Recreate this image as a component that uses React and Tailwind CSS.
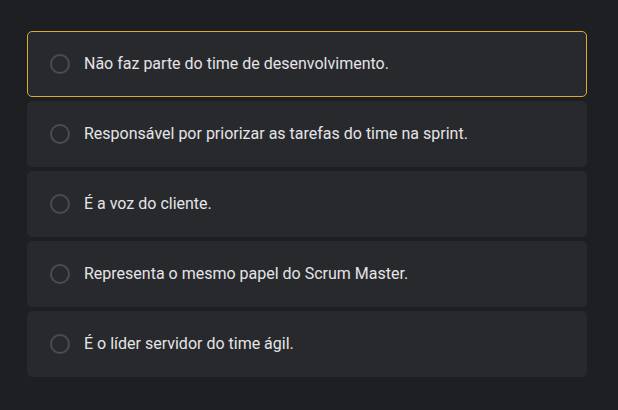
const OPTIONS = [
  'Não faz parte do time de desenvolvimento.',
  'Responsável por priorizar as tarefas do time na sprint.',
  'É a voz do cliente.',
  'Representa o mesmo papel do Scrum Master.',
  'É o líder servidor do time ágil.',
]

export default function App() {
  return (
    <div className="min-h-[410px] bg-[#1e1f23] pt-[31px] pb-[33px] pl-[27px] pr-[31px] font-['Roboto',sans-serif]">
      <div className="flex flex-col gap-1">
        {OPTIONS.map((text, i) => (
          <button
            key={text}
            className={
              'flex h-[66px] items-center rounded-[5px] bg-[#28292d] pl-[22px] text-left ' +
              (i === 0 ? 'border border-[#d8ad2e]' : 'border border-transparent')
            }
          >
            <span className="h-5 w-5 shrink-0 rounded-full border-2 border-[#4b4c50]" />
            <span className="ml-[14px] text-[16px] text-[#e4e4e6]">{text}</span>
          </button>
        ))}
      </div>
    </div>
  )
}
